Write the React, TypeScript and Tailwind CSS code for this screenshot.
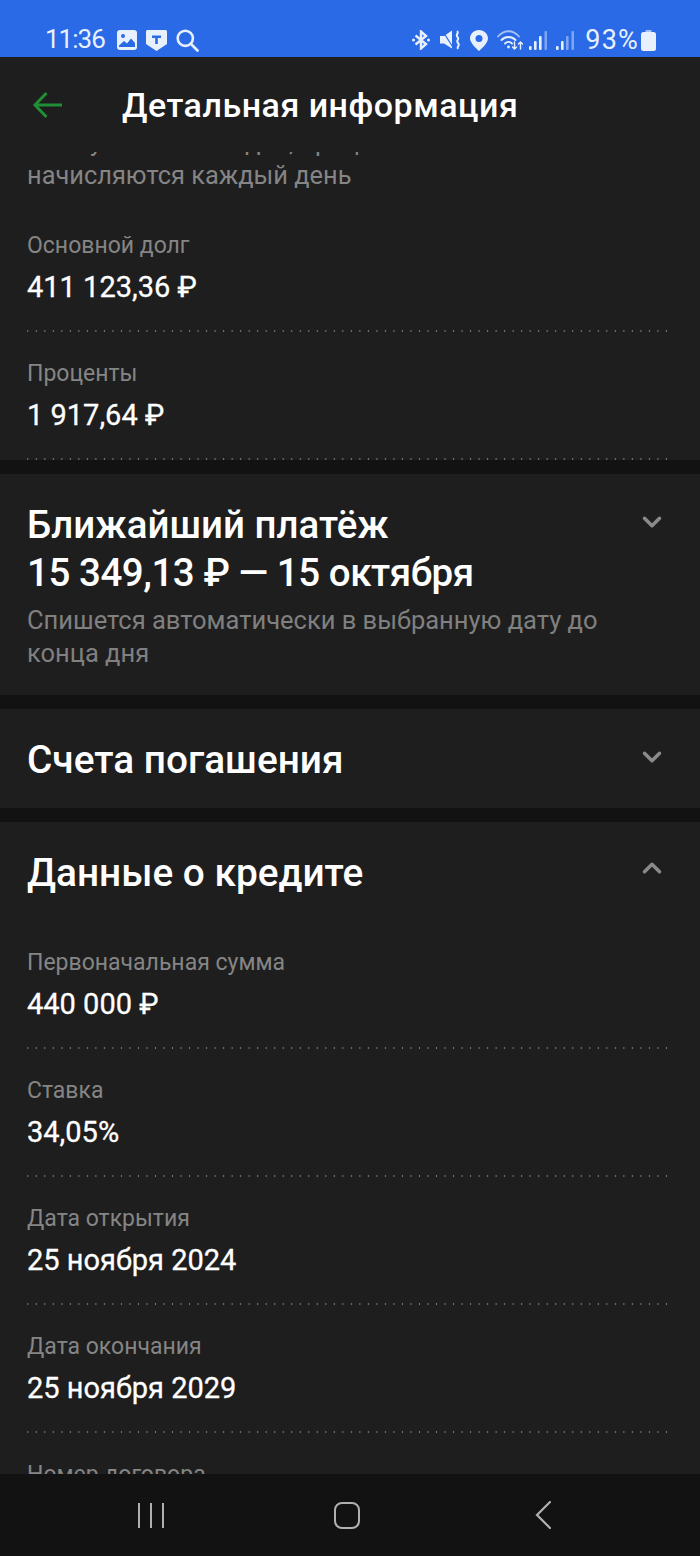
import * as React from "react";
import { ChevronDown, ChevronUp } from "lucide-react";

const FONT = "font-['Roboto','Noto_Sans',sans-serif]";

function Row({ label, value }: { label: string; value: string }) {
  return (
    <div className="h-[128px] px-[27px] pt-[25px]">
      <div className="h-[32px] text-[23px] leading-[34px] text-[#858585]">{label}</div>
      <div className="mt-[10px] h-[33px] text-[29px] leading-[33px] text-white [-webkit-text-stroke:0.3px_white]">{value}</div>
      <div className="mt-[26px] h-[2px] w-[641px] bg-[radial-gradient(circle,#777_0.7px,transparent_1.1px)] bg-[length:8.53px_2px] bg-[position:-3.5px_0]" />
    </div>
  );
}

function Signal({ dim }: { dim: number }) {
  const bars = [
    { x: 0, h: 4 },
    { x: 5, h: 9 },
    { x: 10, h: 14 },
    { x: 15.5, h: 19 },
  ];
  return (
    <svg width="18" height="20" viewBox="0 0 18 20">
      {bars.map((b, i) => (
        <rect key={b.x} x={b.x} y={20 - b.h} width="2.6" height={b.h} rx="1" fill={i >= 4 - dim ? "#7fa6f0" : "#e9f0fd"} />
      ))}
    </svg>
  );
}

function StatusBar() {
  return (
    <div className="flex h-[57px] items-end bg-[#2a6ae6] pl-[45px] pr-[44px] text-[#e9f0fd]">
      <div className="flex h-[34px] items-center">
        <span className="-mt-[3px] text-[26px] leading-[34px] tracking-[-1px]">11:36</span>
        <svg className="ml-[12px]" width="20" height="20" viewBox="0 0 20 20">
          <rect width="20" height="20" rx="3" fill="#e9f0fd" />
          <circle cx="6" cy="6" r="2" fill="#2a6ae6" />
          <path d="M2 15.5l5-4.5 3 2.5 4-5 4 4.5v4H2z" fill="#2a6ae6" />
        </svg>
        <svg className="ml-[9px]" width="21" height="21" viewBox="0 0 21 21">
          <path d="M0 1.5C0 .7.7 0 1.5 0h18c.8 0 1.5.7 1.5 1.5V14l-10.5 7L0 14z" fill="#e9f0fd" />
          <path d="M6 5.5h9V8h-3.2v6H9.2V8H6z" fill="#2a6ae6" />
        </svg>
        <svg className="ml-[9px]" width="23" height="23" viewBox="0 0 23 23" fill="none" stroke="#e9f0fd" strokeWidth="2.6" strokeLinecap="round">
          <circle cx="9.3" cy="9.3" r="7.6" />
          <path d="M15 15l6.5 6.5" />
        </svg>
      </div>
      <div className="ml-auto flex h-[34px] items-center">
        <svg width="18" height="20" viewBox="0 0 18 20" fill="none" stroke="#e9f0fd" strokeWidth="2.4">
          <path d="M3.5 5.5L14 14l-5 4.5v-17L14 6 3.5 14.5" />
          <circle cx="1.5" cy="10" r="1.5" fill="#e9f0fd" stroke="none" />
          <circle cx="16.5" cy="10" r="1.5" fill="#e9f0fd" stroke="none" />
        </svg>
        <svg className="ml-[10px]" width="20" height="20" viewBox="0 0 20 20" fill="none">
          <path d="M0 6h4l8-5.5v18l-8-5H0z" fill="#e9f0fd" />
          <path d="M2 0l12 19" stroke="#2a6ae6" strokeWidth="1.2" />
          <path d="M17 1c2.5 2-2 4 .5 6s-2 3.5.5 6-1.5 3 0 6" stroke="#e9f0fd" strokeWidth="2" />
        </svg>
        <svg className="ml-[10px]" width="18" height="21" viewBox="0 0 18 21">
          <path fillRule="evenodd" d="M9 0C4 0 0 3.7 0 8.5 0 13.5 9 21 9 21s9-7.5 9-12.5C18 3.7 14 0 9 0zm0 5a3.5 3.5 0 1 1 0 7 3.5 3.5 0 0 1 0-7z" fill="#e9f0fd" />
        </svg>
        <svg className="ml-[9px]" width="26" height="20" viewBox="0 0 26 20" fill="none" strokeLinecap="round">
          <path d="M1 6.5c6-7 15-7 21 0" stroke="#a5c2f6" strokeWidth="1.8" />
          <path d="M4.5 10c4-4 10-4 14 0" stroke="#e9f0fd" strokeWidth="1.8" />
          <path d="M8 13.5c2-2 5-2 7 0" stroke="#e9f0fd" strokeWidth="1.8" />
          <circle cx="11.5" cy="17" r="1.4" fill="#e9f0fd" />
          <path d="M17.5 12v7m-2-2l2 2 2-2" stroke="#e9f0fd" strokeWidth="1.4" />
          <path d="M23.5 19v-7m-2 2l2-2 2 2" stroke="#e9f0fd" strokeWidth="1.4" />
        </svg>
        <div className="ml-[6px]"><Signal dim={1} /></div>
        <div className="ml-[9px]"><Signal dim={2} /></div>
        <span className="-mt-[1px] ml-[11px] text-[27px] leading-[34px] tracking-[1.2px]">93%</span>
        <svg className="ml-[2px]" width="15" height="21" viewBox="0 0 15 21">
          <path d="M4.5 0h6v2h-6z" fill="#a5c2f6" />
          <rect y="2" width="15" height="19" rx="2.5" fill="#e9f0fd" />
        </svg>
      </div>
    </div>
  );
}

export default function App() {
  return (
    <div className={`flex h-[1556px] w-[700px] flex-col overflow-hidden bg-[#121212] ${FONT}`}>
      <StatusBar />

      <div className="flex h-[95px] shrink-0 items-center bg-[#1e1e1e] pl-[31px]">
        <svg width="31" height="28" viewBox="0 0 31 28" fill="none" stroke="#1f8f35" strokeWidth="3">
          <path d="M31 14H4" />
          <path d="M15.5 2L4 14l11.5 12" />
        </svg>
        <h1 className="ml-[60px] mt-[1px] text-[34px] font-medium leading-[40px] tracking-[0.5px] text-white">Детальная информация</h1>
      </div>

      <main className="flex-1 overflow-hidden">
        <section className="h-[308px] bg-[#1e1e1e]">
          <div className="h-[52px] overflow-hidden px-[27px] text-[25.4px] leading-[33px] text-[#858585]">
            <div className="-mt-[26px]">Это сумма на сегодня, проценты</div>
            <div>начисляются каждый день</div>
          </div>
          <Row label="Основной долг" value="411 123,36 ₽" />
          <Row label="Проценты" value="1 917,64 ₽" />
        </section>

        <section className="mt-[14px] flex h-[221px] justify-between bg-[#1e1e1e] pl-[27px] pr-[33px] pt-[27px]">
          <div>
            <h2 className="text-[38.5px] font-medium leading-[48px] text-white">
              Ближайший платёж
              <br />
              <span className="tracking-[-0.45px]">15 349,13 ₽ — 15 октября</span>
            </h2>
            <p className="mt-[7px] w-[600px] text-[25.5px] leading-[33px] text-[#808080]">
              Спишется автоматически в выбранную дату до конца дня
            </p>
          </div>
          <ChevronDown size={30} strokeWidth={2.8} className="mt-[6px] text-[#8a8a8a]" />
        </section>

        <section className="mt-[14px] flex h-[99px] justify-between bg-[#1e1e1e] pl-[27px] pr-[33px] pt-[27px]">
          <h2 className="text-[38.8px] font-medium leading-[48px] text-white">Счета погашения</h2>
          <ChevronDown size={30} strokeWidth={2.8} className="mt-[6px] text-[#8a8a8a]" />
        </section>

        <section className="mt-[14px] bg-[#1e1e1e]">
          <div className="flex h-[99px] justify-between pl-[27px] pr-[33px] pt-[27px]">
            <h2 className="text-[38.8px] font-medium leading-[48px] text-white">Данные о кредите</h2>
            <ChevronUp size={30} strokeWidth={2.8} className="mt-[4px] text-[#8a8a8a]" />
          </div>
          <Row label="Первоначальная сумма" value="440 000 ₽" />
          <Row label="Ставка" value="34,05%" />
          <Row label="Дата открытия" value="25 ноября 2024" />
          <Row label="Дата окончания" value="25 ноября 2029" />
          <Row label="Номер договора" value="" />
        </section>
      </main>

      <nav className="relative z-10 flex h-[82px] shrink-0 items-center bg-[#121212]">
        <div className="flex w-[302px] justify-center">
          <div className="flex gap-[10px]">
            <span className="h-[25px] w-[2px] bg-[#b0b0b0]" />
            <span className="h-[25px] w-[2px] bg-[#b0b0b0]" />
            <span className="h-[25px] w-[2px] bg-[#b0b0b0]" />
          </div>
        </div>
        <div className="ml-[32px] h-[27px] w-[26px] rounded-[8px] border-2 border-[#b0b0b0]" />
        <svg className="ml-[175px]" width="16" height="28" viewBox="0 0 16 28" fill="none" stroke="#b0b0b0" strokeWidth="2.2" strokeLinecap="round">
          <path d="M15 1L2 14l13 13" />
        </svg>
      </nav>
    </div>
  );
}
